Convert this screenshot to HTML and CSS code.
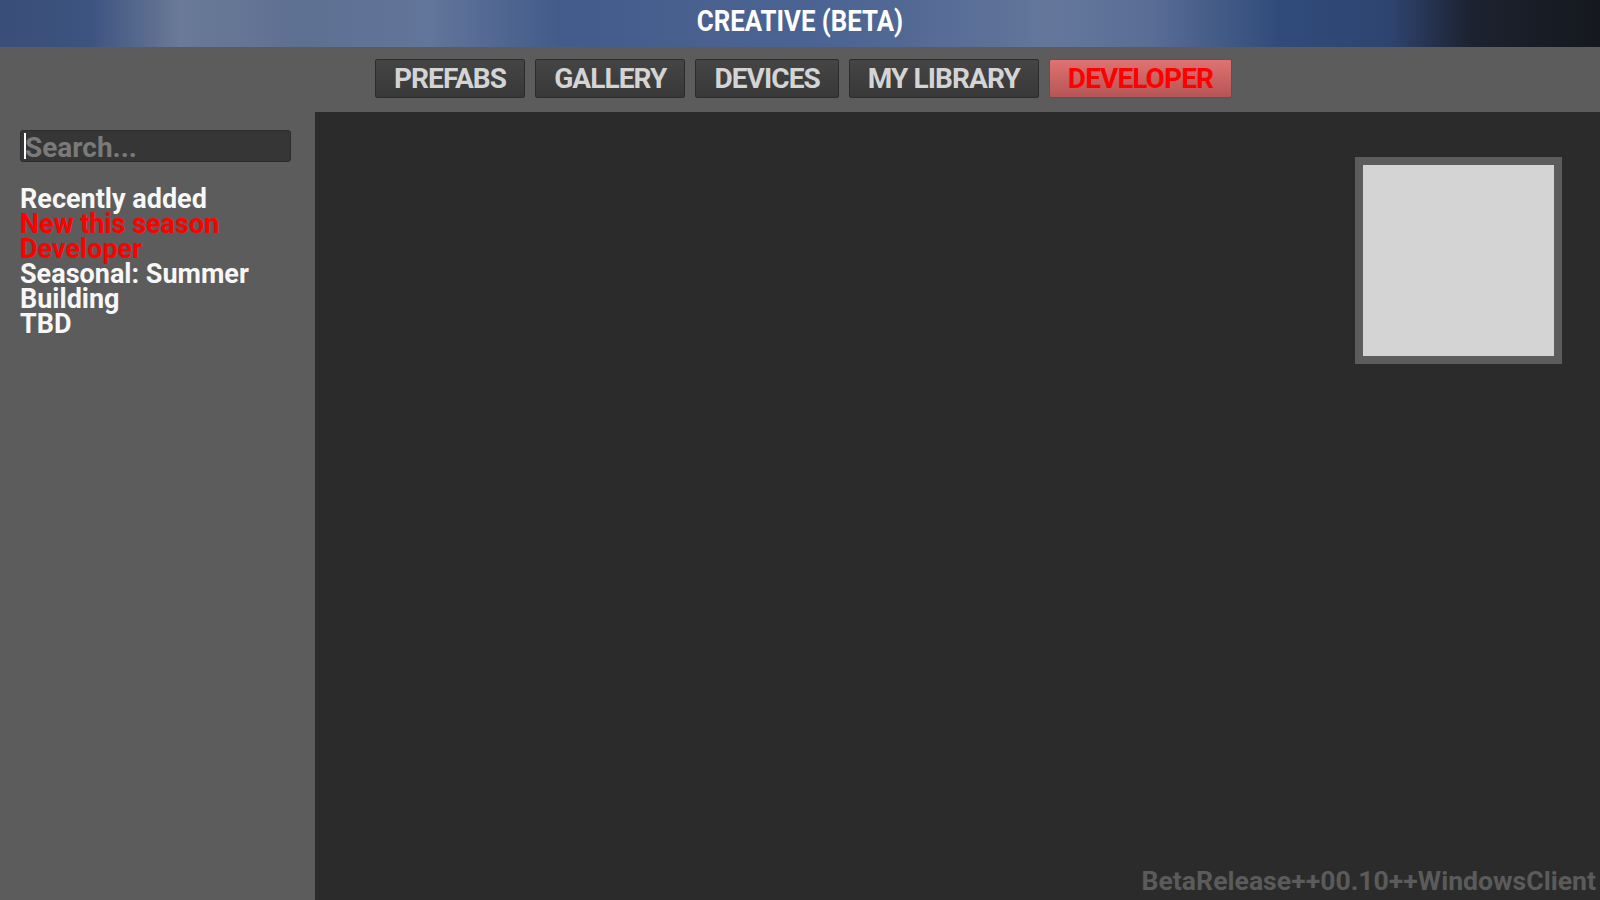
FILE: index.html
```html
<!DOCTYPE html>
<html>
<head>
<meta charset="utf-8">
<link rel="stylesheet" href="styles.css">
</head>
<body>
<div class="app">
  <header class="titlebar"><span class="title">CREATIVE (BETA)</span></header>
  <nav class="tabbar">
    <div class="tab">PREFABS</div>
    <div class="tab">GALLERY</div>
    <div class="tab">DEVICES</div>
    <div class="tab">MY LIBRARY</div>
    <div class="tab active">DEVELOPER</div>
  </nav>
  <div class="body">
    <aside class="sidebar">
      <div class="search"><span class="caret"></span><span class="placeholder">Search...</span></div>
      <ul class="cats">
        <li>Recently added</li>
        <li class="red">New this season</li>
        <li class="red">Developer</li>
        <li>Seasonal: Summer</li>
        <li>Building</li>
        <li>TBD</li>
      </ul>
    </aside>
    <main class="content">
      <div class="tile"><div class="tile-inner"></div></div>
      <div class="build">BetaRelease++00.10++WindowsClient</div>
    </main>
  </div>
</div>
</body>
</html>
```
FILE: styles.css
```css
html, body {
  margin: 0;
  padding: 0;
  width: 1600px;
  height: 900px;
  overflow: hidden;
  background: #2b2b2b;
  font-family: Roboto, "Liberation Sans", sans-serif;
  font-weight: 700;
}
.app {
  display: flex;
  flex-direction: column;
  height: 900px;
}
.titlebar {
  height: 47px;
  flex: none;
  display: flex;
  align-items: center;
  justify-content: center;
  background: linear-gradient(90deg,
    #394f78 0px, #3d5380 90px, #6a7a98 180px, #5e7092 300px, #62759a 430px,
    #425b8a 560px, #4a6190 700px, #4a6393 800px, #526894 900px, #64779b 1050px,
    #5a6d95 1150px, #304b7b 1280px, #2e4470 1390px, #1c2230 1470px, #15181e 1600px);
}
.title {
  display: inline-block;
  color: #ffffff;
  font-size: 29px;
  line-height: 47px;
  transform: scaleX(0.89);
  margin-top: -4px;
}
.tabbar {
  height: 65px;
  flex: none;
  box-sizing: border-box;
  background: #5c5c5c;
  display: flex;
  justify-content: center;
  align-items: flex-start;
  gap: 10px;
  padding: 12px 0 0 7px;
}
.tab {
  height: 39px;
  box-sizing: border-box;
  padding: 0 18px;
  display: flex;
  align-items: center;
  font-size: 28px;
  letter-spacing: -0.9px;
  color: #d4d4d4;
  background: linear-gradient(#454545, #383838);
  border: 1px solid #2c2c2c;
  border-radius: 2px;
}
.tab.active {
  color: #ff0000;
  background: linear-gradient(#e07272, #b65555);
  border-color: #8e3c3c;
}
.body {
  flex: 1;
  display: flex;
  min-height: 0;
}
.sidebar {
  width: 315px;
  flex: none;
  box-sizing: border-box;
  background: #5c5c5c;
  padding: 18px 0 0 20px;
}
.search {
  width: 271px;
  height: 32px;
  box-sizing: border-box;
  background: #363636;
  border: 1px solid #2d2d2d;
  border-radius: 3px;
  display: flex;
  align-items: center;
  padding-left: 3px;
}
.caret {
  width: 2px;
  height: 26px;
  background: #ffffff;
  flex: none;
}
.placeholder {
  color: #7a7a7a;
  font-size: 28px;
  line-height: 30px;
  margin-left: -1px;
  position: relative;
  top: 2px;
}
.cats {
  list-style: none;
  margin: 25px 0 0 0;
  padding: 0;
  font-size: 27px;
  line-height: 24.9px;
  color: #f7f7f7;
}
.cats .red {
  color: #ff0000;
}
.content {
  flex: 1;
  display: flex;
  flex-direction: column;
  padding: 45px 38px 4px 0;
  box-sizing: border-box;
}
.tile {
  align-self: flex-end;
  width: 207px;
  height: 207px;
  box-sizing: border-box;
  padding: 8px;
  background: #5c5c5c;
}
.tile-inner {
  width: 100%;
  height: 100%;
  background: #d4d4d4;
}
.build {
  margin-top: auto;
  align-self: flex-end;
  margin-right: -34px;
  color: #5b5b5b;
  font-size: 26.6px;
  line-height: 30px;
}
```
